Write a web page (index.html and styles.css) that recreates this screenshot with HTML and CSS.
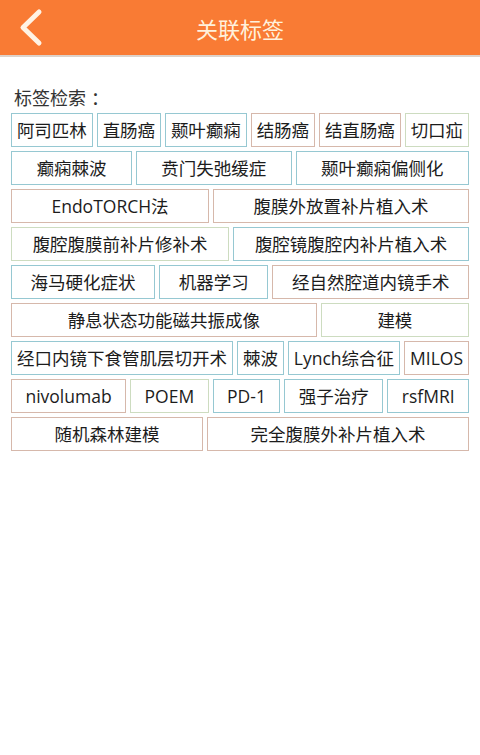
FILE: index.html
```html
<!DOCTYPE html>
<html lang="zh">
<head>
<meta charset="utf-8">
<title>关联标签</title>
<link rel="stylesheet" href="styles.css">
</head>
<body>
<header class="topbar">
  <a class="back" href="#" aria-label="返回">
    <svg width="30" height="40" viewBox="0 0 30 40"><path d="M20 4 L4 19.5 L20 35" fill="none" stroke="#fff3e4" stroke-width="5" stroke-linecap="round" stroke-linejoin="round"/></svg>
  </a>
  <h1 class="title">关联标签</h1>
</header>
<main class="content">
  <div class="label">标签检索<span class="colon">：</span></div>
  <div class="tags">
    <div class="row">
      <span class="tag blue">阿司匹林</span>
      <span class="tag blue">直肠癌</span>
      <span class="tag blue">颞叶癫痫</span>
      <span class="tag brown">结肠癌</span>
      <span class="tag brown">结直肠癌</span>
      <span class="tag green">切口疝</span>
    </div>
    <div class="row">
      <span class="tag blue">癫痫棘波</span>
      <span class="tag blue">贲门失弛缓症</span>
      <span class="tag blue">颞叶癫痫偏侧化</span>
    </div>
    <div class="row">
      <span class="tag brown">EndoTORCH法</span>
      <span class="tag brown">腹膜外放置补片植入术</span>
    </div>
    <div class="row">
      <span class="tag green">腹腔腹膜前补片修补术</span>
      <span class="tag blue">腹腔镜腹腔内补片植入术</span>
    </div>
    <div class="row">
      <span class="tag blue">海马硬化症状</span>
      <span class="tag blue">机器学习</span>
      <span class="tag brown">经自然腔道内镜手术</span>
    </div>
    <div class="row">
      <span class="tag brown">静息状态功能磁共振成像</span>
      <span class="tag green">建模</span>
    </div>
    <div class="row">
      <span class="tag blue">经口内镜下食管肌层切开术</span>
      <span class="tag blue">棘波</span>
      <span class="tag blue">Lynch综合征</span>
      <span class="tag brown">MILOS</span>
    </div>
    <div class="row">
      <span class="tag brown">nivolumab</span>
      <span class="tag green">POEM</span>
      <span class="tag blue">PD-1</span>
      <span class="tag blue">强子治疗</span>
      <span class="tag blue">rsfMRI</span>
    </div>
    <div class="row">
      <span class="tag brown">随机森林建模</span>
      <span class="tag brown">完全腹膜外补片植入术</span>
    </div>
  </div>
</main>
</body>
</html>
```

FILE: styles.css
```css
* { box-sizing: border-box; }
html, body { margin: 0; padding: 0; background: #ffffff; }
body {
  font-family: "Open Sans", "Noto Sans CJK SC", "Noto Sans", sans-serif;
  color: #1c1c1c;
  width: 480px;
  min-height: 755px;
}
.topbar {
  position: relative;
  height: 57px;
  background: #f97b34;
  border-bottom: 2px solid #ddd2ca;
  display: flex;
  align-items: center;
  justify-content: center;
}
.back {
  position: absolute;
  left: 19px;
  top: 8px;
  display: block;
  width: 30px;
  height: 40px;
}
.back svg { display: block; }
.title {
  margin: 0;
  font-family: "Noto Sans CJK SC", sans-serif;
  font-weight: 400;
  font-size: 22px;
  line-height: 30px;
  color: #fff1dc;
}
.content {
  padding: 29px 11px 0 11px;
}
.label {
  font-family: "Noto Sans CJK SC", sans-serif;
  font-size: 18px;
  line-height: 22px;
  color: #333333;
  padding-left: 3px;
  margin-bottom: 5px;
}
.colon { margin-left: 5px; }
.tags {
  display: flex;
  flex-direction: column;
  gap: 4px;
}
.row {
  display: flex;
  gap: 4px;
}
.tag {
  flex: 1 1 auto;
  min-width: 0;
  height: 34px;
  padding: 0 4px;
  border: 1px solid #9fcdd6;
  font-size: 17.5px;
  line-height: 32px;
  text-align: center;
  white-space: nowrap;
  color: #1c1c1c;
  background: #ffffff;
}
.tag.blue { border-color: #96c8d2; }
.tag.brown { border-color: #d6b8ab; }
.tag.green { border-color: #cddcc0; }
```
